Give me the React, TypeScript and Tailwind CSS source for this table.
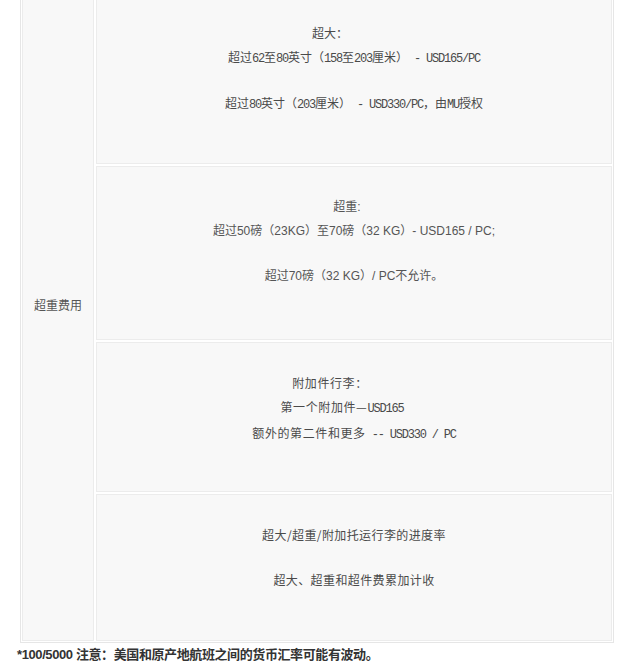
import React from "react";

const mono = "font-['Liberation_Mono'] tracking-[-1.2px]";
const song = "font-['Noto_Sans_CJK_SC',sans-serif]";
const sans = "font-['Liberation_Sans','Noto_Sans_CJK_SC',sans-serif]";

const M: React.FC<{ children: React.ReactNode }> = ({ children }) => (
  <span className={mono}>{children}</span>
);

const Cell: React.FC<{ className?: string; children: React.ReactNode }> = ({ className = "", children }) => (
  <div className={`border border-[#ececec] bg-[#f8f8f8] ${className}`}>{children}</div>
);

export default function App() {
  return (
    <div className="w-[640px] h-[670px] bg-white overflow-hidden">
      {/* Table */}
      <div className="ml-[20px] w-[594px] -mt-[32px] border border-[#e6e6e6] p-px flex gap-[2px]">
        <Cell className={`w-[72px] flex items-center justify-center text-[12px] text-[#555] ${sans}`}>
          超重费用
        </Cell>

        <div className="flex-1 flex flex-col gap-[2px]">
          {/* Oversize */}
          <Cell className={`h-[194px] pt-[50px] text-center text-[12px] leading-[24px] text-[#4a4a4a] ${song}`}>
            <div className="pr-[48px]">超大：</div>
            <div>
              超过<M>62</M>至<M>80</M>英寸（<M>158</M>至<M>203</M>厘米）<M> - USD165/PC</M>
            </div>
            <div className="mt-[20px]">
              超过<M>80</M>英寸（<M>203</M>厘米）<M> - USD330/PC</M>，由<M>MU</M>授权
            </div>
          </Cell>

          {/* Overweight */}
          <Cell className={`h-[174px] pt-[28px] text-center text-[12px] leading-[24px] text-[#555] ${sans}`}>
            <div className="pr-[14px]">超重:</div>
            <div>超过50磅（23KG）至70磅（32 KG）- USD165 / PC;</div>
            <div className="mt-[21px]">超过70磅（32 KG）/ PC不允许。</div>
          </Cell>

          {/* Extra pieces */}
          <Cell className={`h-[150px] pt-[28px] text-center text-[12px] leading-[24px] tracking-[0.6px] text-[#4a4a4a] ${song}`}>
            <div className="pr-[48px]">附加件行李：</div>
            <div className="pr-[24px]">
              第一个附加件—<M>USD165</M>
            </div>
            <div>
              额外的第二件和更多<M> -- USD330 / PC</M>
            </div>
          </Cell>

          {/* Rates */}
          <Cell className={`h-[147px] pt-[28px] text-center text-[12px] leading-[24px] tracking-[0.4px] text-[#4a4a4a] ${song}`}>
            <div>超大/超重/附加托运行李的进度率</div>
            <div className="mt-[21px]">超大、超重和超件费累加计收</div>
          </Cell>
        </div>
      </div>

      {/* Footnote */}
      <p className={`mt-[2px] ml-[17px] text-[13px] leading-[20px] tracking-[-0.4px] font-bold text-[#333] ${sans}`}>
        *100/5000 注意：美国和原产地航班之间的货币汇率可能有波动。
      </p>
    </div>
  );
}
